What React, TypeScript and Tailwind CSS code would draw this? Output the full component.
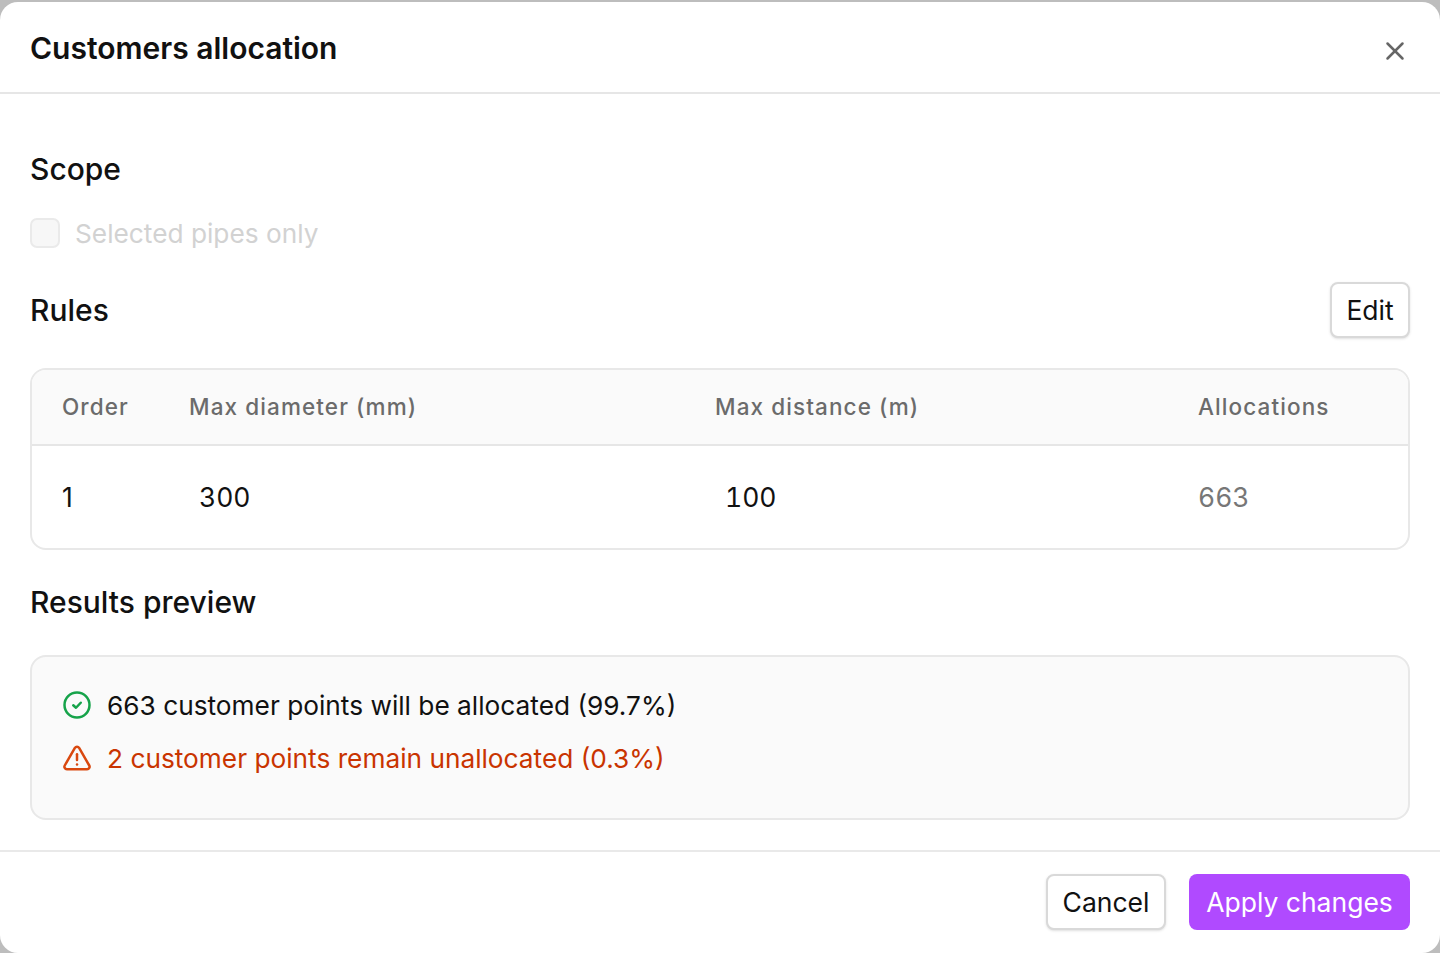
import { X } from "lucide-react";

function CheckIcon() {
  return (
    <svg width="30" height="30" viewBox="0 0 24 24" fill="none" stroke="#16a34a" strokeWidth="2" strokeLinecap="round" strokeLinejoin="round">
      <circle cx="12" cy="12" r="10" />
      <path d="m9 12.2 2.2 2 3.8-4" />
    </svg>
  );
}

function WarnIcon() {
  return (
    <svg width="30" height="30" viewBox="0 0 24 24" fill="none" stroke="#d9480f" strokeWidth="2" strokeLinecap="round" strokeLinejoin="round">
      <path d="M10.3 3.9 2.2 18a2 2 0 0 0 1.7 3h16.2a2 2 0 0 0 1.7-3L13.7 3.9a2 2 0 0 0-3.4 0Z" />
      <path d="M12 9v4.5" />
      <path d="M12 17.2h.01" />
    </svg>
  );
}

export default function App() {
  return (
    <div className="h-[953px] overflow-hidden bg-[#bdbdbd] pt-[2px] font-['Inter',sans-serif] text-[#111]">
      <div className="flex h-[951px] flex-col rounded-[18px] bg-white">
        <div className="flex h-[92px] items-start justify-between border-b-2 border-[#e6e6e6] pl-[30px] pr-[30px]">
          <h1 className="pt-[26px] text-[30px] leading-[40px] font-semibold">Customers allocation</h1>
          <X className="mt-[34px] text-[#666]" size={30} strokeWidth={2} />
        </div>

        <div className="flex flex-1 flex-col px-[30px]">
          <h2 className="mt-[55px] text-[30px] leading-[40px] font-medium">Scope</h2>
          <label className="mt-[29px] flex items-center gap-[15px]">
            <span className="h-[30px] w-[30px] rounded-[7px] border-2 border-[#eaeaea] bg-[#f7f7f7]" />
            <span className="h-[30px] pt-px text-[26.25px] leading-[30px] text-[#d2d2d2]">Selected pipes only</span>
          </label>

          <div className="mt-[34px] flex items-center justify-between">
            <h2 className="text-[30px] leading-[40px] font-medium">Rules</h2>
            <button className="h-[56px] w-[80px] rounded-[8px] border-2 border-[#d9d9d9] bg-white pt-px text-[26.5px] shadow-sm">Edit</button>
          </div>

          <div className="mt-[30px] h-[182px] overflow-hidden rounded-[16px] border-2 border-[#e8e8e8]">
            <div className="flex h-[76px] items-center border-b-2 border-[#e6e6e6] bg-[#fafafa] text-[22.5px] font-medium tracking-[1.1px] text-[#6b6b6b]">
              <div className="w-[157px] pl-[30px]">Order</div>
              <div className="w-[526px]">Max diameter (mm)</div>
              <div className="w-[483px]">Max distance (m)</div>
              <div>Allocations</div>
            </div>
            <div className="flex flex-1 items-center pt-[26px] text-[26.5px] leading-[50px] tabular-nums">
              <div className="w-[167px] pl-[30px] [font-variant-numeric:normal]">1</div>
              <div className="w-[526px]">300</div>
              <div className="w-[473px]">100</div>
              <div className="text-[#777]">663</div>
            </div>
          </div>

          <h2 className="mt-[32px] text-[30px] leading-[40px] font-medium">Results preview</h2>

          <div className="mt-[33px] flex h-[165px] flex-col gap-[23px] rounded-[16px] border-2 border-[#e8e8e8] bg-[#fafafa] pt-[33px] pl-[30px] text-[26.25px] leading-[30px]">
            <div className="flex items-center gap-[15px]">
              <CheckIcon />
              <span className="h-[30px] pt-px">663 customer points will be allocated (99.7%)</span>
            </div>
            <div className="flex items-center gap-[15px] text-[#c93400]">
              <WarnIcon />
              <span className="h-[30px] pt-px">2 customer points remain unallocated (0.3%)</span>
            </div>
          </div>
        </div>

        <div className="flex h-[103px] items-start justify-end gap-[23px] border-t-2 border-[#e9e9e9] px-[30px] pt-[22px]">
          <button className="h-[56px] w-[120px] rounded-[8px] border-2 border-[#d9d9d9] bg-white pt-px text-[26.5px] shadow-sm">Cancel</button>
          <button className="h-[56px] w-[221px] rounded-[8px] bg-[#b04aff] pt-px text-[26.5px] text-white">Apply changes</button>
        </div>
      </div>
    </div>
  );
}
